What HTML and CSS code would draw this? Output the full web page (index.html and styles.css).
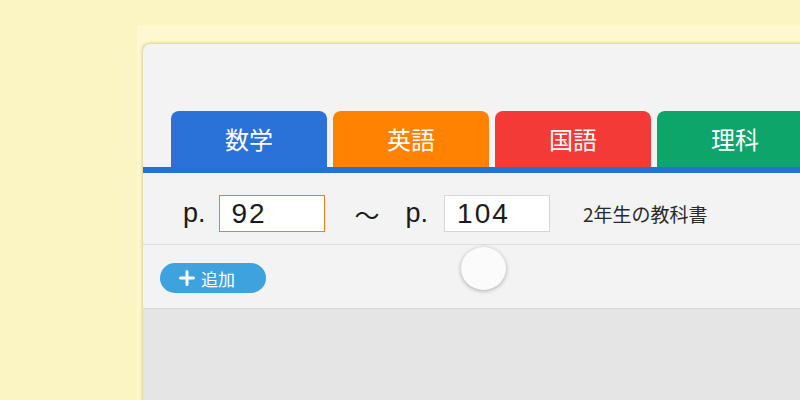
FILE: index.html
```html
<!DOCTYPE html>
<html lang="ja">
<head>
<meta charset="utf-8">
<link rel="stylesheet" href="styles.css">
</head>
<body>
<div class="stage">
  <div class="card">
    <div class="tabs">
      <div class="tab tab-math">数学</div>
      <div class="tab tab-eng">英語</div>
      <div class="tab tab-jp">国語</div>
      <div class="tab tab-sci">理科</div>
    </div>
    <div class="bar"></div>
    <div class="range">
      <span class="p">p.</span>
      <div class="field field-active">92</div>
      <span class="tilde">〜</span>
      <span class="p p2">p.</span>
      <div class="field">104</div>
      <span class="note">2年生の教科書</span>
    </div>
    <div class="actions">
      <button class="add"><svg class="plus" viewBox="0 0 16 16" width="16" height="16"><path d="M8 1.5v13M1.5 8h13" stroke="#fff" stroke-width="3" stroke-linecap="round"/></svg><span>追加</span></button>
    </div>
    <div class="lower"></div>
    <div class="knob"></div>
  </div>
</div>
</body>
</html>
```
FILE: styles.css
```css
html, body {
  margin: 0;
  padding: 0;
  height: 100%;
  overflow: hidden;
}
body {
  background: #fbf4c3;
  font-family: "Noto Sans CJK JP", "Noto Sans", sans-serif;
}
.stage {
  margin: 25px 0 0 137px;
  padding: 19px 0 0 6px;
  background: #fdf8cf;
  height: 400px;
}
.card {
  position: relative;
  width: 700px;
  height: 420px;
  background: #f3f3f3;
  border-radius: 7px 0 0 0;
  box-shadow: 0 0 3px 1px rgba(190, 170, 80, 0.55);
  display: flex;
  flex-direction: column;
}
.tabs {
  display: flex;
  gap: 6px;
  padding: 67px 0 0 28px;
}
.tab {
  flex: 0 0 156px;
  height: 56px;
  border-radius: 8px 8px 0 0;
  color: #fff;
  font-size: 24px;
  display: flex;
  align-items: center;
  justify-content: center;
  padding-bottom: 2px;
  box-sizing: border-box;
}
.tab-math { background: #2a72d8; }
.tab-eng { background: #ff8203; }
.tab-jp { background: #f43a37; }
.tab-sci { background: #0ea56a; }
.bar {
  height: 6px;
  background: #2a6fd6;
}
.range {
  display: flex;
  align-items: center;
  height: 72px;
  box-sizing: border-box;
  padding: 9px 0 0 40px;
  border-bottom: 1px solid #dedede;
  color: #1b1b1b;
}
.p {
  font-family: "Liberation Sans", Arial, sans-serif;
  font-size: 27px;
  margin-right: 13px;
}
.p2 { margin-right: 16px; }
.field {
  width: 106px;
  height: 37px;
  box-sizing: border-box;
  background: #fff;
  border: 1px solid #d6d6d6;
  font-family: "Liberation Sans", Arial, sans-serif;
  font-size: 28px;
  letter-spacing: 2px;
  line-height: 35px;
  padding-left: 12px;
}
.field-active {
  border: 1.5px solid #f07a1e;
}
.tilde {
  font-size: 25px;
  margin: 2px 26px 0 30px;
}
.note {
  font-size: 19px;
  margin-left: 33px;
  color: #2a2a2a;
}
.actions {
  height: 63px;
  padding: 18px 0 0 17px;
  box-sizing: border-box;
}
.add {
  display: flex;
  align-items: center;
  gap: 6px;
  height: 30px;
  width: 106px;
  border: none;
  border-radius: 15px;
  background: #3ea2df;
  color: #fff;
  font-family: "Noto Sans CJK JP", sans-serif;
  font-size: 17px;
  padding: 0 0 0 19px;
}
.plus { flex: none; }
.lower {
  flex: 1;
  background: #e5e5e5;
  border-top: 1px solid #dcdcdc;
}
.knob {
  position: absolute;
  left: 318px;
  top: 203px;
  width: 45px;
  height: 43px;
  border-radius: 50%;
  background: #fbfbfb;
  box-shadow: 0 1px 4px rgba(0, 0, 0, 0.3);
}
```
